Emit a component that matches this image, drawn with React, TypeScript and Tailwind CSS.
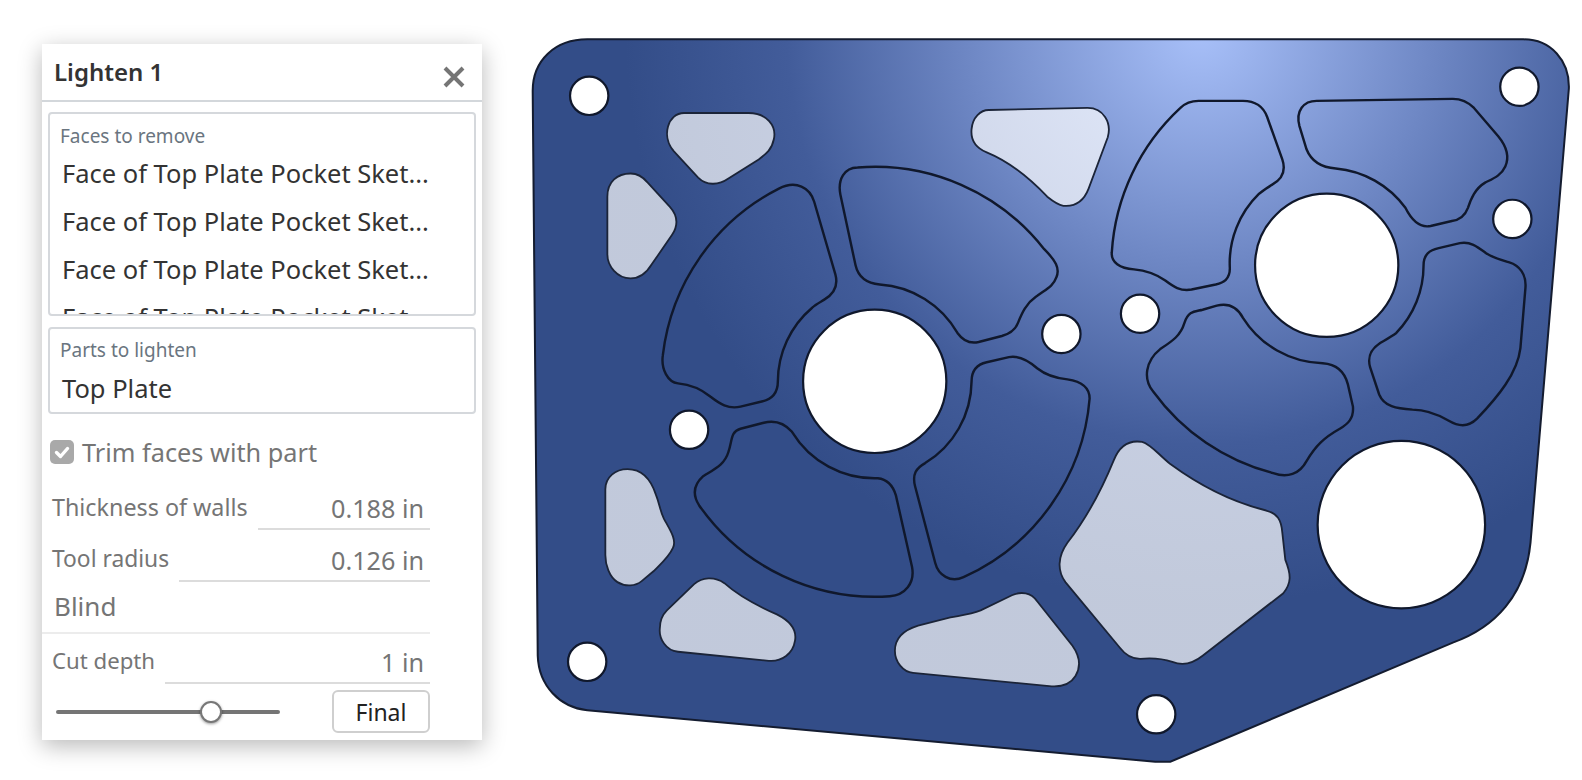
// traced in the coordinates of the shrunk reference, the group below scales them up
const lightPockets = [
  'M678 112L742 112C760 112 770 125 767 138C765 148 760 152 752 158L722 177C712 184 700 184 692 176L668 150C655 135 662 112 678 112Z',
  'M602 195C602 180 612 172 625 172C632 172 637 175 642 181L664 205C672 214 672 224 666 233L646 262C640 272 633 276 625 276C612 276 602 264 602 252Z',
  'M980 109L1078 107C1094 107 1102 122 1098 136L1079 187C1074 200 1065 205 1054 204C1048 203 1043 199 1038 195C1020 176 1000 160 978 151C966 146 962 138 963 128C964 116 972 109 980 109Z',
  'M600 485C600 473 610 465 622 465C636 465 645 475 650 490C654 500 654 506 658 514C664 525 671 535 667 543C663 552 656 558 648 566L636 576C630 581 620 582 612 577C604 572 600 560 600 550Z',
  'M661 605L688 579C696 572 708 571 718 578C728 587 745 598 770 609C782 615 790 624 788 635C786 648 775 656 762 655L672 646C660 645 653 633 654 623C654 615 656 610 661 605Z',
  'M887 645C887 632 897 624 910 620L942 612C952 610 962 609 972 605L1003 590C1012 586 1022 587 1028 596L1063 640C1070 650 1072 660 1066 670C1060 680 1050 681 1040 680L905 667C895 666 887 656 887 645Z',
  'M1058 538C1072 520 1088 495 1104 456C1110 441 1120 436 1132 438C1140 440 1148 450 1160 460C1190 482 1222 498 1255 506C1266 509 1270 515 1271 528L1274 555C1280 570 1280 578 1272 588L1192 650C1182 658 1172 660 1162 656C1150 652 1140 652 1130 653C1122 653 1116 650 1110 642L1056 577C1048 566 1048 552 1058 538Z',
];

const darkPockets = [
  // left hub
  'M657 352A213 213 0 0 1 772 187C789 178 803 186 807 200L828 272C831 283 827 291 817 297C812 300 808 302 805 305A96 96 0 0 0 771 378C771 390 765 396 755 398L734 403C722 406 713 400 704 393C693 384 682 381 672 380C662 379 655 366 657 352Z',
  'M850 166A213 213 0 0 1 1035 247C1046 258 1051 266 1047 275C1044 284 1036 287 1027 294C1017 301 1013 310 1009 320C1006 328 1000 331 993 333L970 339C961 341 954 337 949 330A96 96 0 0 0 872 282C860 281 851 276 848 263L833 193C830 178 837 166 850 166Z',
  'M963 378C963 366 969 361 978 359L1000 354C1010 352 1020 358 1028 365C1038 373 1048 375 1058 376C1071 378 1080 384 1080 395A213 213 0 0 1 955 572C942 578 930 570 927 558L907 482C904 470 908 464 917 459A96 96 0 0 0 963 378Z',
  'M785 428A96 96 0 0 0 870 474C880 475 885 481 888 491L904 562C907 578 897 590 882 591A213 213 0 0 1 693 501C686 490 688 480 697 472C708 465 718 461 722 448C726 436 724 428 734 425L757 419C769 416 778 420 785 428Z',
  // right hub
  'M1102 250A213 213 0 0 1 1170 107C1175 102 1180 100 1188 100L1232 100C1244 100 1252 105 1256 116L1271 158C1275 170 1270 178 1261 183C1256 186 1252 189 1248 192A96 96 0 0 0 1219 266C1219 277 1213 280 1205 282L1181 287C1170 289 1163 284 1155 278C1145 271 1135 268 1124 267C1110 266 1101 260 1102 250Z',
  'M1305 100L1440 98C1449 98 1455 101 1461 107L1485 135C1494 146 1496 156 1492 165C1488 174 1480 177 1472 181C1462 187 1458 197 1455 206C1452 214 1447 218 1439 219L1418 224C1408 226 1400 220 1393 206A96 96 0 0 0 1324 167C1308 166 1299 158 1295 148L1288 125C1284 110 1292 100 1305 100Z',
  'M1411 263C1411 252 1417 248 1426 246L1447 241C1458 239 1465 245 1473 251C1481 256 1489 258 1496 260C1506 263 1513 272 1512 285L1507 345C1504 370 1485 393 1464 415C1456 423 1446 423 1436 417C1424 410 1412 406 1400 406C1384 405 1372 403 1367 391L1358 364C1355 353 1359 346 1368 340C1373 337 1380 333 1384 330A96 96 0 0 0 1411 263Z',
  'M1232 315A96 96 0 0 0 1311 360C1325 361 1333 369 1336 381L1341 403C1342 415 1336 420 1328 425C1312 434 1304 442 1295 457C1288 470 1276 474 1262 469A213 213 0 0 1 1143 388C1133 376 1135 358 1150 346C1162 338 1170 333 1174 320C1178 308 1184 309 1192 307L1206 303C1218 300 1226 304 1232 315Z',
];

const holes: [number, number, number][] = [
  [584, 95, 19], [1506, 86, 19], [1499, 217, 19], [1052, 331, 19],
  [1130, 311, 19], [683, 426, 19], [582, 656, 19], [1146, 708, 19],
  [867, 378, 71], [1315, 263, 71], [1389, 520, 83],
];

function Plate() {
  return (
    <svg viewBox="522 0 1060 780" className="ml-[40px] h-[780px] w-[1060px] shrink-0">
      <defs>
        <radialGradient id="sheen" gradientUnits="userSpaceOnUse" cx="1190" cy="30" r="570">
          <stop offset="0" stopColor="#a8c0f9" />
          <stop offset="0.4" stopColor="#6f88c5" />
          <stop offset="0.72" stopColor="#425c9a" />
          <stop offset="1" stopColor="#334d88" />
        </radialGradient>
      </defs>
      <g transform="scale(1.0089)">
        <path
          d="M528 90C528 60 550 39 582 39L1510 39C1537 39 1556 60 1555 88L1517 538C1512 590 1482 622 1440 637L1160 755L1145 755L582 704C555 701 534 680 533 650Z"
          fill="url(#sheen)"
          stroke="#141c30"
          strokeWidth="2"
        />
        {lightPockets.map((d, i) => (
          <g key={i}>
            <path d={d} fill="#fff" />
            <path d={d} fill="url(#sheen)" fillOpacity="0.3" stroke="#1b2438" strokeWidth="1.8" />
          </g>
        ))}
        {darkPockets.map((d, i) => (
          <path key={i} d={d} fill="none" stroke="#10182c" strokeWidth="2.4" />
        ))}
        {holes.map(([cx, cy, r], i) => (
          <circle key={i} cx={cx} cy={cy} r={r} fill="#fff" stroke="#10182c" strokeWidth="2.2" />
        ))}
      </g>
    </svg>
  );
}

function Field({ label, value, labelClass }: { label: string; value: string; labelClass: string }) {
  return (
    <div className="ml-[10px] flex h-[52px] w-[378px] items-stretch gap-[10px]">
      <span className={`mt-[14px] leading-[30px] whitespace-nowrap text-[#757575] ${labelClass}`}>{label}</span>
      <span className="flex-1 border-b-2 border-[#dcdcdc] pt-[12px] pr-[6px] text-right text-[25.2px] leading-[36px] text-[#757575]">
        {value}
      </span>
    </div>
  );
}

export default function App() {
  return (
    <div className="flex h-[780px] w-[1582px] overflow-hidden bg-white font-['Noto_Sans',sans-serif]">
      <div className="mt-[44px] ml-[42px] flex h-[696px] w-[440px] shrink-0 flex-col bg-white shadow-[0_6px_22px_rgba(0,0,0,0.28)]">
        <div className="flex h-[58px] shrink-0 items-center justify-between border-b-2 border-[#d3d7db] pr-[17px] pl-[12px]">
          <span className="text-[24px] font-semibold leading-[32px] text-[#333]">Lighten 1</span>
          <svg viewBox="0 0 22 22" className="mt-[9px] h-[22px] w-[22px]">
            <path d="M2 2L20 20M20 2L2 20" stroke="#757575" strokeWidth="4" />
          </svg>
        </div>

        <div className="mx-[6px] mt-[10px] h-[204px] shrink-0 overflow-hidden rounded-[4px] border-2 border-[#d5d8dc] pl-[10px]">
          <div className="mt-[9px] text-[19px] leading-[26px] text-[#6a7580]">Faces to remove</div>
          <div className="flex flex-col pl-[2px] text-[25.5px] leading-[48px] text-[#333]">
            <span className="whitespace-nowrap">Face of Top Plate Pocket Sket...</span>
            <span className="whitespace-nowrap">Face of Top Plate Pocket Sket...</span>
            <span className="whitespace-nowrap">Face of Top Plate Pocket Sket...</span>
            <span className="whitespace-nowrap">Face of Top Plate Pocket Sket...</span>
          </div>
        </div>

        <div className="mx-[6px] mt-[11px] h-[87px] shrink-0 rounded-[4px] border-2 border-[#d5d8dc] pl-[10px]">
          <div className="mt-[8px] text-[19px] leading-[26px] text-[#6a7580]">Parts to lighten</div>
          <div className="mt-[5px] pl-[2px] text-[25.5px] leading-[40px] text-[#333]">Top Plate</div>
        </div>

        <div className="mt-[24px] ml-[8px] flex h-[28px] items-center gap-[8px]">
          <span className="flex h-[24px] w-[24px] items-center justify-center rounded-[5px] bg-[#a9a9a9]">
            <svg viewBox="0 0 24 24" className="h-[24px] w-[24px]">
              <path d="M6.5 12.5L10.5 16.5L17.5 8.5" fill="none" stroke="#fff" strokeWidth="3.4" strokeLinecap="round" strokeLinejoin="round" />
            </svg>
          </span>
          <span className="text-[25.3px] leading-[28px] text-[#757575]">Trim faces with part</span>
        </div>

        <div className="mt-[12px]">
          <Field label="Thickness of walls" value="0.188 in" labelClass="text-[23.3px]" />
          <Field label="Tool radius" value="0.126 in" labelClass="text-[22.8px]" />
        </div>

        <div className="h-[52px] w-[388px] border-b-2 border-[#ececec] pt-[6px] pl-[12px] text-[26px] leading-[36px] text-[#757575]">
          Blind
        </div>
        <div className="-mt-[2px]">
          <Field label="Cut depth" value="1 in" labelClass="text-[22.2px]" />
        </div>

        <div className="mt-[6px] ml-[14px] flex w-[374px] items-center justify-between">
          <div className="relative h-[4px] w-[224px] rounded-full bg-[#757575]">
            <span className="absolute top-[-9px] left-[144px] h-[22px] w-[22px] rounded-full border-2 border-[#777] bg-white shadow-[0_1px_3px_rgba(0,0,0,0.4)]" />
          </div>
          <button className="h-[43px] w-[98px] rounded-[6px] border-2 border-[#cfcfcf] bg-white text-[23px] leading-[30px] text-[#222]">
            Final
          </button>
        </div>
      </div>
      <Plate />
    </div>
  );
}
